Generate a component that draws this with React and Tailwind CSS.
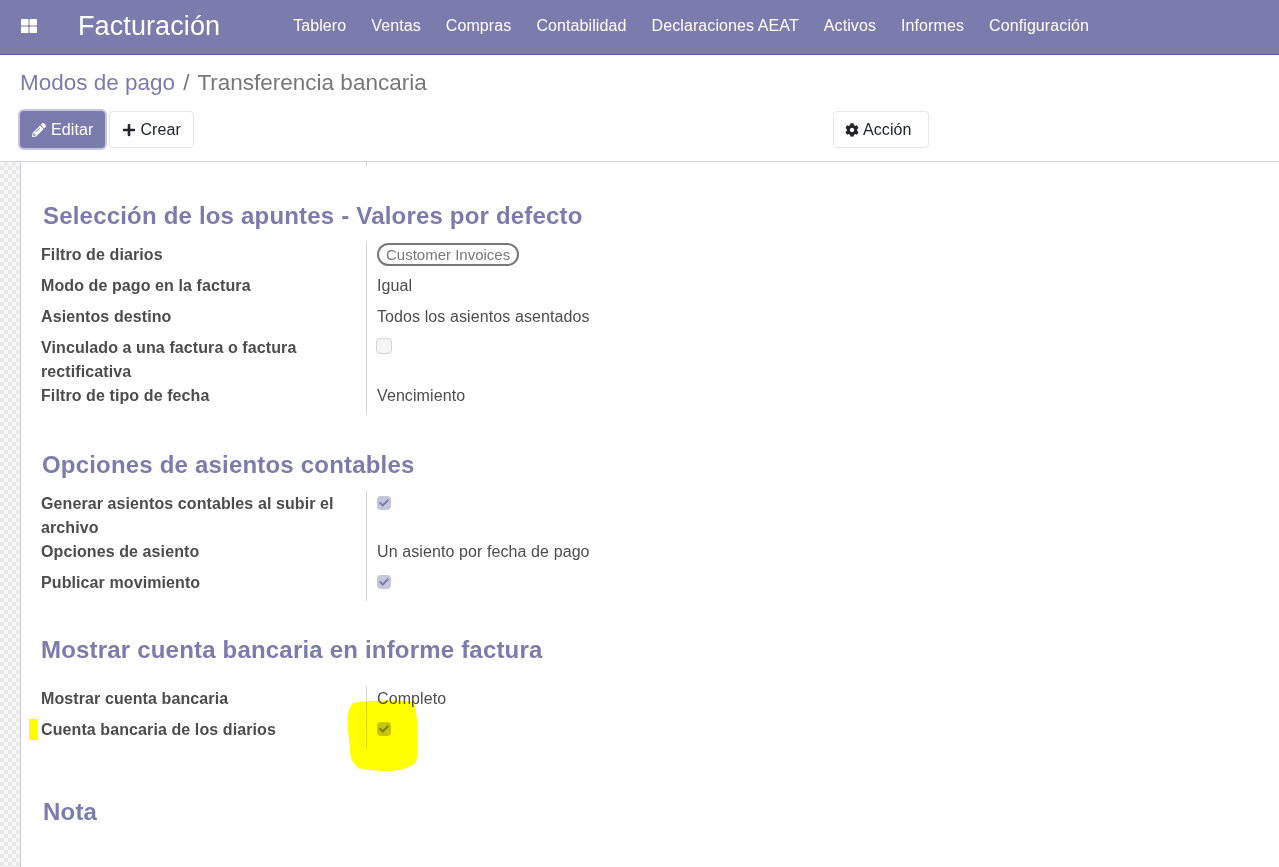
import React from "react";
import { FaThLarge, FaPencilAlt, FaPlus, FaCog, FaCheck } from "react-icons/fa";

const NAV = ["Tablero", "Ventas", "Compras", "Contabilidad", "Declaraciones AEAT", "Activos", "Informes", "Configuración"];

function Check({ on }) {
  if (!on) {
    return <span className="mt-0.5 -ml-px block size-4 rounded border border-neutral-300 bg-neutral-100" />;
  }
  return (
    <span className="mt-1 flex size-3.5 items-center justify-center rounded bg-[#c6c5dd]">
      <FaCheck className="size-2.5 text-[#7c7bad]" />
    </span>
  );
}

function Row({ label, children }) {
  return (
    <div className="grid min-h-[31px] grid-cols-[325px_1fr]">
      <div className="-mb-px pt-px font-bold text-[#4c4c4c]">{label}</div>
      <div className="border-l border-neutral-300 pt-px pl-2.5 text-[#4c4c4c]">{children}</div>
    </div>
  );
}

function Heading({ children, className }) {
  return <h2 className={`text-2xl tracking-[0.008em] font-bold text-[#7c7bad] ${className}`}>{children}</h2>;
}

export default function App() {
  return (
    <div className="relative flex h-screen flex-col overflow-hidden bg-white font-['Liberation_Sans',Arial,sans-serif] text-base tracking-[0.006em]">
      <header className="flex h-[55px] items-center border-b border-[#5f5e97] bg-[#7c7bad] pb-0.5 text-white">
        <FaThLarge className="ml-[21px] size-4" />
        <span className="ml-[41px] text-[27px]">Facturación</span>
        <nav className="ml-[73px] flex gap-[25px]">
          {NAV.map((n) => (
            <span key={n}>{n}</span>
          ))}
        </nav>
      </header>

      <div className="border-b border-gray-300 px-5 pt-3 pb-[13px]">
        <div className="text-[22.5px] leading-8 tracking-normal text-[#777777]">
          <span className="text-[#7c7bad]">Modos de pago</span>
          <span className="ml-2">/</span>
          <span className="ml-2">Transferencia bancaria</span>
        </div>
        <div className="mt-3 flex">
          <div className="flex w-[813px] gap-1">
            <button className="flex h-[37px] items-center gap-[5px] rounded bg-[#7c7bad] px-3 text-white ring-2 ring-[#c6c5dd]">
              <FaPencilAlt className="size-3.5" />
              Editar
            </button>
            <button className="flex h-[37px] items-center gap-1 rounded border border-gray-200 bg-white px-3 text-[#212529]">
              <FaPlus className="size-3.5" />
              Crear
            </button>
          </div>
          <button className="flex h-[37px] items-center gap-1 rounded border border-gray-200 bg-white pr-4 pl-3 text-[#212529]">
            <FaCog className="-ml-px size-3.5" />
            Acción
          </button>
        </div>
      </div>

      <div className="flex flex-1">
        <div className="w-5 bg-[repeating-conic-gradient(#e9e9e9_0_25%,#f6f6f6_0_50%)] bg-[length:8px_8px]" />
        <main className="flex-1 border-l border-[#c9c8dc] pl-5">
          <div className="h-1 w-[326px] border-r border-neutral-300" />
          <Heading className="mt-9 mb-3 ml-0.5 leading-7">Selección de los apuntes - Valores por defecto</Heading>
          <div className="leading-6">
            <Row label="Filtro de diarios">
              <span className="rounded-full border-2 border-[#777777] px-[7px] py-px text-[15px] tracking-normal text-[#777777]">Customer Invoices</span>
            </Row>
            <Row label="Modo de pago en la factura">Igual</Row>
            <Row label="Asientos destino">Todos los asientos asentados</Row>
            <Row label="Vinculado a una factura o factura rectificativa">
              <Check />
            </Row>
            <Row label="Filtro de tipo de fecha">Vencimiento</Row>
          </div>

          <Heading className="mt-9 mb-3 ml-px pt-px leading-7">Opciones de asientos contables</Heading>
          <div className="leading-6">
            <Row label="Generar asientos contables al subir el archivo">
              <Check on />
            </Row>
            <Row label="Opciones de asiento">Un asiento por fecha de pago</Row>
            <Row label="Publicar movimiento">
              <Check on />
            </Row>
          </div>

          <Heading className="mt-8 mb-5 pt-px leading-8">Mostrar cuenta bancaria en informe factura</Heading>
          <div className="leading-6">
            <Row label="Mostrar cuenta bancaria">Completo</Row>
            <Row label="Cuenta bancaria de los diarios">
              <Check on />
            </Row>
          </div>

          <Heading className="mt-12 ml-0.5 pt-0.5 leading-7">Nota</Heading>
        </main>
      </div>

      <svg className="pointer-events-none absolute top-0 left-0 size-full mix-blend-multiply">
        <rect x="29" y="719" width="9" height="21" fill="#ffff00" />
        <path
          d="M353 703 C370 700 400 700 413 702 C417 710 417 720 417 730 C418 742 418 752 416 762 C408 769 398 771 388 771 C378 771 366 770 358 768 C352 762 350 757 350 750 C349 735 346 722 348 715 C349 709 350 706 353 703 Z"
          fill="#ffff00"
        />
      </svg>
    </div>
  );
}
